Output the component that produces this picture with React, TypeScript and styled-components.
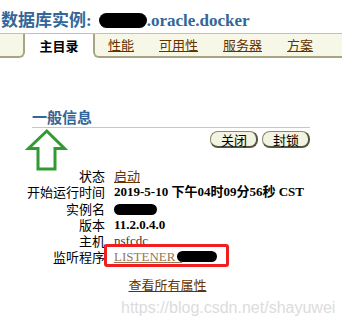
import styled, { createGlobalStyle } from "styled-components";

const GlobalStyle = createGlobalStyle`
  body {
    margin: 0;
    background: #ffffff;
    font-family: "Noto Sans CJK SC", sans-serif;
  }
`;

const Page = styled.div`
  position: relative;
  width: 342px;
  height: 331px;
  overflow: hidden;
`;

const Title = styled.h1`
  margin: 0;
  padding: 11px 0 0 1px;
  height: 20px;
  line-height: 20px;
  font-size: 17px;
  font-weight: bold;
  color: #336699;
  font-family: "Liberation Serif", "Noto Sans CJK SC", serif;
  white-space: nowrap;
`;

const Redact = styled.span<{ w: number; h: number }>`
  display: inline-block;
  width: ${(p) => p.w}px;
  height: ${(p) => p.h}px;
  background: #000;
  border-radius: ${(p) => p.h / 2}px;
  vertical-align: middle;
`;

const TitleRedact = styled(Redact)`
  margin: 0 0 0 7px;
  vertical-align: -2px;
`;

const TabBar = styled.div`
  display: flex;
  margin-top: 2px;
  border-top: 1px solid #c4c2a8;
  height: 24px;
`;

const TabFiller = styled.div`
  width: 23px;
  background: #f7f7e7;
  border-bottom: 2px solid #a8a682;
  border-right: 2px solid #a8a682;
  border-bottom-right-radius: 6px;
`;

const ActiveTab = styled.div`
  width: 68px;
  background: #ffffff;
  display: flex;
  align-items: center;
  justify-content: center;
  padding-bottom: 1px;
  font-size: 13px;
  font-weight: bold;
  color: #000;
`;

const TabRest = styled.div`
  flex: 1;
  display: flex;
  align-items: center;
  gap: 25px;
  padding: 0 0 1px 13px;
  background: #f7f7e7;
  border-bottom: 2px solid #a8a682;
  border-left: 2px solid #a8a682;
  border-bottom-left-radius: 6px;
`;

const TabLink = styled.a`
  font-size: 13px;
  color: #663300;
  text-decoration: underline;
  white-space: nowrap;
`;

const SectionTitle = styled.h2`
  margin: 50px 0 0 32px;
  width: 278px;
  line-height: 18px;
  padding-bottom: 1px;
  border-bottom: 1px solid #cccc99;
  font-size: 15px;
  font-weight: bold;
  color: #336699;
`;

const ButtonRow = styled.div`
  display: flex;
  justify-content: flex-end;
  gap: 4px;
  width: 310px;
  margin-top: 3px;
`;

const Button = styled.button`
  height: 17px;
  padding: 0 9px 0 10px;
  font-family: "Noto Sans CJK SC", sans-serif;
  font-size: 13px;
  line-height: 13px;
  color: #000;
  background: #f3f3e1;
  border: 1px solid #8a8a70;
  border-right: 2px solid #55553f;
  border-bottom: 2px solid #55553f;
  border-radius: 8px;
`;

const InfoGrid = styled.div`
  display: grid;
  grid-template-columns: 105px 1fr;
  grid-auto-rows: 16.3px;
  column-gap: 9px;
  margin-top: 20px;
  line-height: 16.3px;
  font-size: 13px;
`;

const Label = styled.div`
  text-align: right;
  color: #000;
  white-space: nowrap;
`;

const Value = styled.div<{ bold?: boolean }>`
  font-family: "Liberation Serif", "Noto Sans CJK SC", serif;
  font-weight: ${(p) => (p.bold ? "bold" : "normal")};
  color: ${(p) => (p.bold ? "#000" : "#333")};
  white-space: nowrap;
`;

const ValueLink = styled.a<{ faded?: boolean }>`
  font-family: "Noto Sans CJK SC", sans-serif;
  color: ${(p) => (p.faded ? "#9a7550" : "#663300")};
  text-decoration: underline;
`;

const SerifLink = styled(ValueLink)`
  font-family: "Liberation Serif", serif;
`;

const Highlight = styled.span`
  position: relative;
  display: inline-block;
  &::after {
    content: "";
    position: absolute;
    left: -10px;
    right: -12px;
    top: -5px;
    bottom: -1px;
    border: 3px solid #f01e1e;
    border-radius: 3px;
  }
`;

const ListenerRedact = styled(Redact)`
  margin-left: -5px;
  vertical-align: -1px;
`;

const MoreRow = styled.div`
  width: 335px;
  margin-top: 11px;
  text-align: center;
  line-height: 16px;
  font-size: 13px;
`;

const Arrow = styled.svg`
  position: absolute;
  left: 25px;
  top: 128px;
`;

const Watermark = styled.div`
  position: absolute;
  left: 121px;
  top: 299px;
  font-family: "Liberation Sans", sans-serif;
  font-size: 16px;
  color: #dcdcdc;
  text-shadow: 0 0 1px #fff;
  white-space: nowrap;
`;

const tabs = ["性能", "可用性", "服务器", "方案"];

export default function App() {
  return (
    <Page>
      <GlobalStyle />
      <Title>
        数据库实例:
        <TitleRedact w={48} h={15} />
        .oracle.docker
      </Title>
      <TabBar>
        <TabFiller />
        <ActiveTab>主目录</ActiveTab>
        <TabRest>
          {tabs.map((t) => (
            <TabLink key={t}>{t}</TabLink>
          ))}
        </TabRest>
      </TabBar>

      <SectionTitle>一般信息</SectionTitle>
      <ButtonRow>
        <Button>关闭</Button>
        <Button>封锁</Button>
      </ButtonRow>

      <InfoGrid>
        <Label>状态</Label>
        <Value>
          <ValueLink>启动</ValueLink>
        </Value>
        <Label>开始运行时间</Label>
        <Value bold>2019-5-10 下午04时09分56秒 CST</Value>
        <Label>实例名</Label>
        <Value>
          <Redact w={43} h={11} />
        </Value>
        <Label>版本</Label>
        <Value bold>11.2.0.4.0</Value>
        <Label>主机</Label>
        <Value>nsfcdc</Value>
        <Label>监听程序</Label>
        <Value>
          <Highlight>
            <SerifLink faded>
              LISTENER_
              <ListenerRedact w={40} h={11} />
            </SerifLink>
          </Highlight>
        </Value>
      </InfoGrid>

      <MoreRow>
        <ValueLink>查看所有属性</ValueLink>
      </MoreRow>

      <Arrow width="44" height="46" viewBox="0 0 44 46">
        <path
          d="M21.8 3 L3.5 20.5 L13 20.5 L13 41 L30 41 L30 20.5 L39.5 20.5 Z"
          fill="none"
          stroke="#339933"
          strokeWidth="3"
        />
      </Arrow>

      <Watermark>https://blog.csdn.net/shayuwei</Watermark>
    </Page>
  );
}
